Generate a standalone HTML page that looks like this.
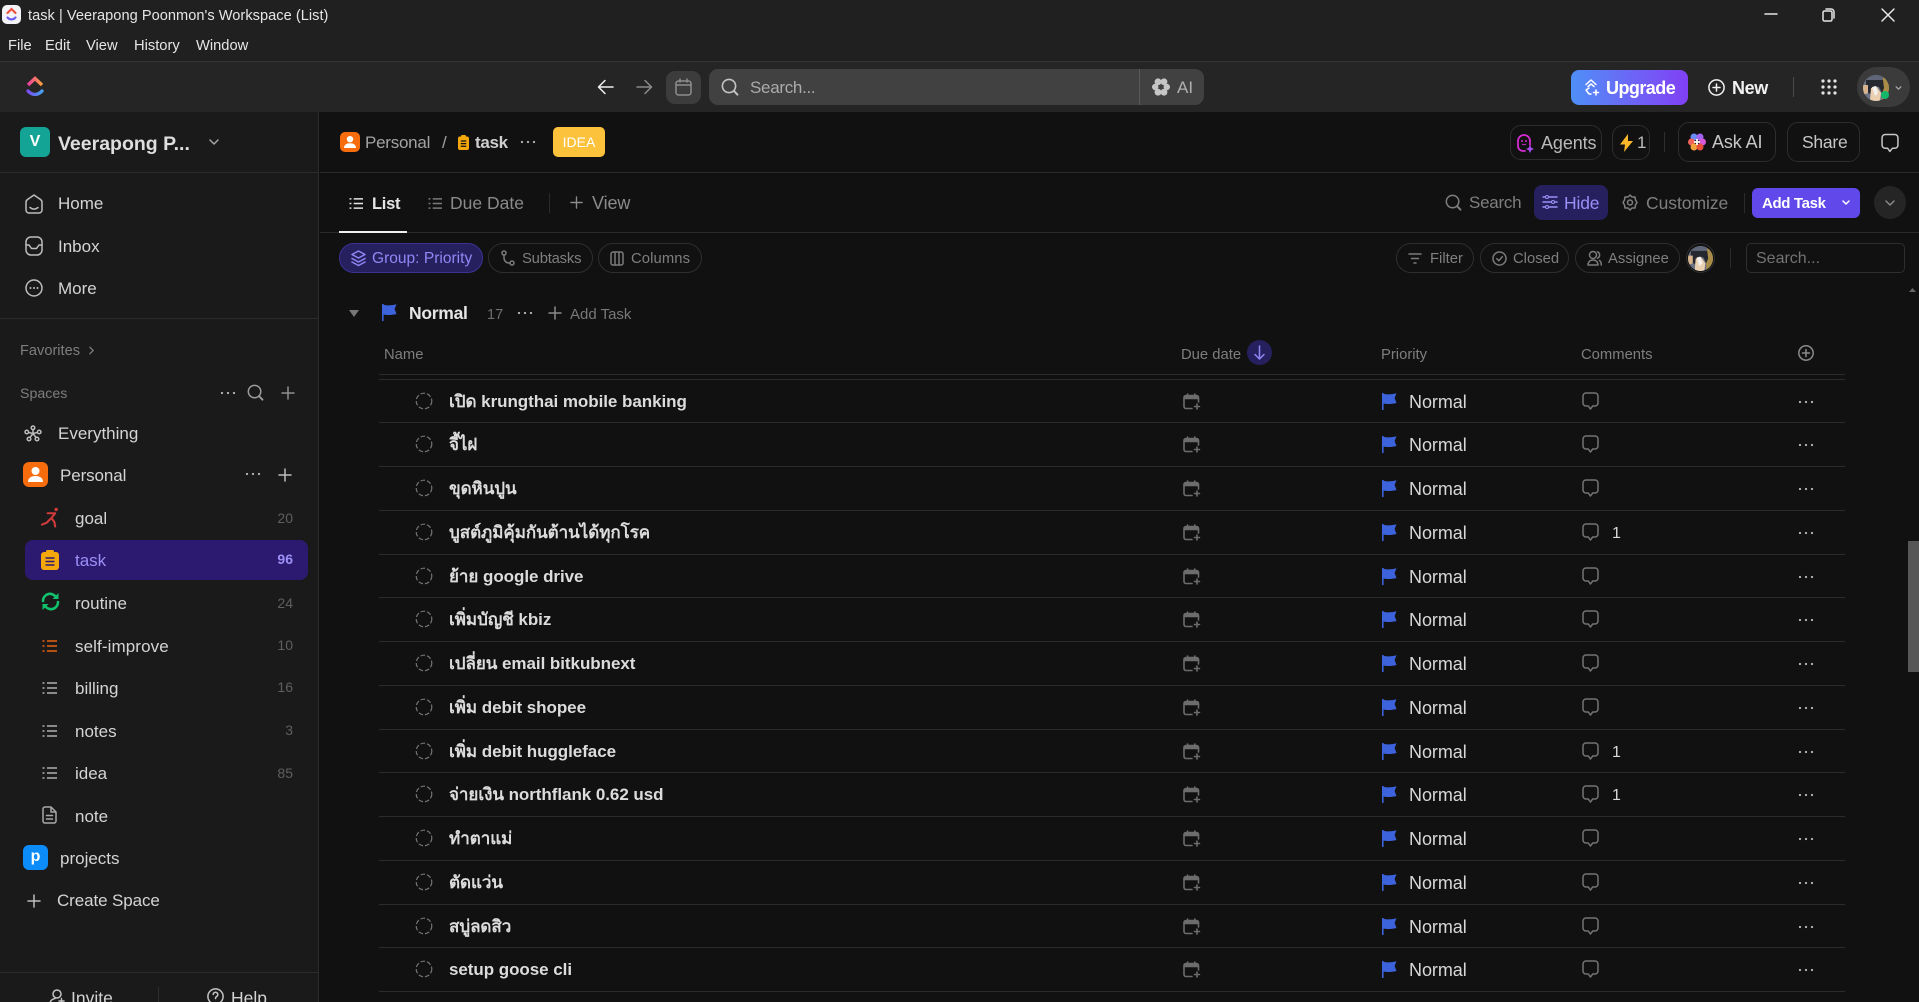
<!DOCTYPE html>
<html lang="en"><head><meta charset="utf-8"><title>task | Veerapong Poonmon's Workspace (List)</title>
<style>
*{box-sizing:border-box}
html,body{margin:0;padding:0;width:1919px;height:1002px;overflow:hidden;background:#111;font-family:"Liberation Sans","Noto Sans CJK SC",sans-serif;color:#ddd}
#w{position:absolute;left:0;top:0;width:1919px;height:1002px;overflow:hidden;background:#111}
.a{position:absolute}
.t{position:absolute;white-space:nowrap;line-height:24px;height:24px}
svg{position:absolute;overflow:visible}
.s{fill:none;stroke:currentColor;stroke-width:1.5;stroke-linecap:round;stroke-linejoin:round}
.chip{position:absolute;border:1px solid #2e2e2e;border-radius:15px;height:30px;top:243px}
.line{position:absolute;height:1px;background:#2b2b2b}
.nav{font-size:17px;color:#d4d4d4}
.cnt{font-size:14px;color:#5f5f5f;text-align:right;width:40px;left:253px}
.r{position:absolute;left:0;width:1919px;height:44px}
.r .name{left:449px;top:11px;font-size:17px;font-weight:700;color:#dcdcdc;letter-spacing:-.05px}
.r .pri{left:1409px;top:11px;font-size:18px;color:#d8d8d8;letter-spacing:-.06px}
.r .one{left:1612px;top:12px;font-size:16px;color:#d8d8d8}
.r .fl{left:1382px;top:14px}
.r .dt{left:1798px;top:21px}
.g{color:#8a8a8a}
.ch{font-size:14.8px;color:#7f7f7f}
.hd{font-size:14.8px;color:#7e7e7e;top:343px}
.rl{left:379px;width:1466px;height:1px;background:#2b2b2b;position:absolute}
</style></head><body>
<div id="w">
<svg width="0" height="0" style="position:absolute">
<symbol id="flag" viewBox="0 0 15 17"><path d="M0 0h1.600v17H0zM1.600 .8C5 1.800 9.500 1.600 14.500 .3L12.600 5l1.900 5C9.500 11.200 5 11.400 1.600 10.500z" fill="#3c62dc"/></symbol>
<symbol id="cal" viewBox="0 0 18 17"><g fill="none" stroke="#6c6c6c" stroke-width="1.600" stroke-linecap="round"><path d="M9 15.500H3a2 2 0 0 1-2-2V4.500a2 2 0 0 1 2-2h10.500a2 2 0 0 1 2 2V9"/><path d="M1 5.500h14.500M4.600 1v3M11.800 1v3"/><path d="M14 11v5M11.500 13.500h5"/></g><path d="M1.500 3h13.500v2.500H1.500z" fill="#6c6c6c"/></symbol>
<symbol id="cm" viewBox="0 0 17 18"><path d="M4 1h9a3 3 0 0 1 3 3v7a3 3 0 0 1-3 3h-2.300l-2.300 3-2.100-3H4a3 3 0 0 1-3-3V4a3 3 0 0 1 3-3z" fill="none" stroke="#747474" stroke-width="1.500" stroke-linejoin="round"/></symbol>
<symbol id="circ" viewBox="0 0 18 18"><circle cx="9" cy="9" r="7.800" fill="none" stroke="#747474" stroke-width="1.200" stroke-dasharray="4.600 2"/></symbol>
<symbol id="dots" viewBox="0 0 16 4"><circle cx="2" cy="2" r="1.150" fill="#b5b5b5"/><circle cx="8" cy="2" r="1.150" fill="#b5b5b5"/><circle cx="14" cy="2" r="1.150" fill="#b5b5b5"/></symbol>
<symbol id="lst" viewBox="0 0 16 14"><g fill="none" stroke="currentColor" stroke-width="1.600"><path d="M5 2h10M5 7h10M5 12h10"/><path d="M.5 2h2M.5 7h2M.5 12h2"/></g></symbol>
<symbol id="plus" viewBox="0 0 14 14"><path d="M7 1v12M1 7h12" fill="none" stroke="currentColor" stroke-width="1.500" stroke-linecap="round"/></symbol>
<symbol id="mag" viewBox="0 0 18 18"><circle cx="8" cy="8" r="6.600" fill="none" stroke="currentColor" stroke-width="1.600"/><path d="M12.800 12.800l3.600 3.800" fill="none" stroke="currentColor" stroke-width="2" stroke-linecap="round"/></symbol>
<symbol id="av" viewBox="0 0 26 26"><clipPath id="cp"><circle cx="13" cy="13" r="13"/></clipPath><g clip-path="url(#cp)"><rect width="26" height="26" fill="#6d7385"/><path d="M19 0h7v26h-7z" fill="#a98c46"/><path d="M3 5h17l1 8-2 5-3-6-4-1-3 2-2 6-4-3z" fill="#26282f"/><path d="M0 10l5 0 0 8-5 2z" fill="#d7b48e"/><path d="M8 13l6-1 4 6-1 8H7z" fill="#ead0b0"/><path d="M9 12l4-1 2 7-3 3z" fill="#f4f2ee"/><path d="M3 0h17v5H3z" fill="#5f6678"/></g></symbol>
</svg>

<!-- title bar -->
<div class="a" style="left:0;top:0;width:1919px;height:61px;background:#202020"></div>
<div class="a" style="left:2px;top:5px;width:19px;height:19px;border-radius:5px;background:#f4f4f8"></div>
<svg style="left:6px;top:7px" width="11" height="15" viewBox="0 0 11 15"><path d="M1.500 6L5.500 2l4 4" fill="none" stroke="#f0533f" stroke-width="2.200" stroke-linecap="round"/><path d="M1.500 10.500c2.400 2.600 5.600 2.600 8 0" fill="none" stroke="#6a5cf5" stroke-width="2.200" stroke-linecap="round"/></svg>
<div class="t" style="left:28px;top:4px;font-size:14.600px;color:#e6e6e6;letter-spacing:.03px">task | Veerapong Poonmon's Workspace (List)</div>
<div class="t" style="left:8px;top:34px;font-size:14.700px;color:#e6e6e6">File</div>
<div class="t" style="left:45px;top:34px;font-size:14.700px;color:#e6e6e6">Edit</div>
<div class="t" style="left:86px;top:34px;font-size:14.700px;color:#e6e6e6">View</div>
<div class="t" style="left:134px;top:34px;font-size:14.700px;color:#e6e6e6">History</div>
<div class="t" style="left:196px;top:34px;font-size:14.700px;color:#e6e6e6">Window</div>
<svg style="left:1765px;top:8px;color:#e5e5e5" width="130" height="14" viewBox="0 0 130 14"><path class="s" d="M0 6h12" stroke-width="1.200"/><rect class="s" x="58" y="3" width="9" height="10" rx="1.500" stroke-width="1.200"/><path class="s" d="M61 1h5a3 3 0 0 1 3 3v6" stroke-width="1.200"/><path class="s" d="M117 1l12 12M129 1l-12 12" stroke-width="1.200"/></svg>
<!-- toolbar -->
<div class="a" style="left:0;top:61px;width:1919px;height:51px;background:#252525;border-top:1px solid #353535"></div>
<svg style="left:26px;top:76px" width="18" height="21" viewBox="0 0 18 21"><defs><linearGradient id="lg1" x1="0" y1="0" x2="1" y2="0"><stop offset="0" stop-color="#f03ea0"/><stop offset="1" stop-color="#fba03a"/></linearGradient><linearGradient id="lg2" x1="0" y1="0" x2="1" y2="0"><stop offset="0" stop-color="#7a4df5"/><stop offset="1" stop-color="#45a0f0"/></linearGradient></defs><path d="M2 9L9 2.500 16 9" fill="none" stroke="url(#lg1)" stroke-width="3.400"/><path d="M2 15c4.200 4.600 9.800 4.600 14 0" fill="none" stroke="url(#lg2)" stroke-width="3.400" stroke-linecap="round"/></svg>
<svg style="left:597px;top:79px;color:#f0f0f0" width="17" height="16" viewBox="0 0 17 16"><path class="s" d="M16 8H1.500M8 1.500L1.500 8 8 14.500" stroke-width="1.600"/></svg>
<svg style="left:636px;top:79px;color:#8a8a8a" width="17" height="16" viewBox="0 0 17 16"><path class="s" d="M1 8h14.500M9 1.500L15.500 8 9 14.500" stroke-width="1.600"/></svg>
<div class="a" style="left:666px;top:71px;width:35px;height:33px;background:#3c3c3c;border-radius:9px"></div>
<svg style="left:675px;top:78px;color:#8d8d8d" width="17" height="18" viewBox="0 0 17 18"><rect class="s" x="1" y="3" width="15" height="14" rx="2.500"/><path class="s" d="M1 7h15M5 1v3M12 1v3"/></svg>
<div class="a" style="left:709px;top:69px;width:495px;height:36px;background:#414141;border-radius:9px"></div>
<div class="a" style="left:1139px;top:69px;width:1px;height:36px;background:#5a5a5a"></div>
<svg style="left:721px;top:78px;color:#c4c4c4" width="18" height="18"><use href="#mag"/></svg>
<div class="t" style="left:750px;top:76px;font-size:17px;color:#ababab;letter-spacing:-.3px">Search...</div>
<svg style="left:1152px;top:78px" width="18" height="18" viewBox="0 0 18 18"><g fill="#c6c6c6"><circle cx="6" cy="3.800" r="3.400"/><circle cx="12" cy="3.800" r="3.400"/><circle cx="3.200" cy="9" r="3.200"/><circle cx="14.800" cy="9" r="3.200"/><circle cx="6" cy="14.200" r="3.400"/><circle cx="12" cy="14.200" r="3.400"/></g><circle cx="9" cy="9" r="2.400" fill="#414141"/></svg>
<div class="t" style="left:1177px;top:76px;font-size:17px;color:#b0b0b0">AI</div>
<div class="a" style="left:1571px;top:70px;width:117px;height:35px;border-radius:8px;background:linear-gradient(90deg,#4f8ff7,#6e63f6 55%,#8040f5)"></div>
<svg style="left:1583px;top:78px;color:#fff" width="17" height="18" viewBox="0 0 17 18"><path class="s" d="M3 6.500L8 2l5 4.500M5 8.500L8 6l3 2.500M3 12l3-2M3 12l3 4h2M13 12v5M10.500 14.500h5"/></svg>
<div class="t" style="left:1606px;top:76px;font-size:18px;font-weight:700;color:#fff;letter-spacing:-.55px">Upgrade</div>
<svg style="left:1708px;top:79px;color:#f3f3f3" width="17" height="17" viewBox="0 0 17 17"><circle class="s" cx="8.500" cy="8.500" r="7.600"/><path class="s" d="M8.500 5v7M5 8.500h7"/></svg>
<div class="t" style="left:1732px;top:76px;font-size:18px;font-weight:700;color:#f2f2f2;letter-spacing:-.4px">New</div>
<div class="a" style="left:1793px;top:77px;width:1px;height:20px;background:#4a4a4a"></div>
<svg style="left:1821px;top:79px" width="16" height="16" viewBox="0 0 16 16"><g fill="#e4e4e4"><circle cx="2" cy="2" r="1.600"/><circle cx="8" cy="2" r="1.600"/><circle cx="14" cy="2" r="1.600"/><circle cx="2" cy="8" r="1.600"/><circle cx="8" cy="8" r="1.600"/><circle cx="14" cy="8" r="1.600"/><circle cx="2" cy="14" r="1.600"/><circle cx="8" cy="14" r="1.600"/><circle cx="14" cy="14" r="1.600"/></g></svg>
<div class="a" style="left:1857px;top:67px;width:53px;height:40px;background:#3b3b3b;border-radius:20px"></div>
<svg style="left:1863px;top:75px" width="26" height="26"><use href="#av"/></svg>
<div class="a" style="left:1881px;top:91px;width:8px;height:8px;border-radius:50%;background:#12b76a"></div>
<svg style="left:1895px;top:86px;color:#aaa" width="7" height="4" viewBox="0 0 8 5"><path class="s" d="M1 1l3 3 3-3"/></svg>

<!-- sidebar -->
<div class="a" style="left:0;top:112px;width:319px;height:890px;background:#1a1a1a;border-right:1px solid #2b2b2b"></div>
<div class="a" style="left:20px;top:127px;width:30px;height:30px;border-radius:6px;background:#14a495;color:#fff;font-weight:700;font-size:16px;line-height:30px;text-align:center">V</div>
<div class="t" style="left:58px;top:132px;font-size:19.500px;font-weight:700;color:#dedede">Veerapong P...</div>
<svg style="left:209px;top:139px;color:#a6a6a6" width="10" height="7" viewBox="0 0 10 7"><path class="s" d="M1 1l4 4 4-4"/></svg>
<div class="line" style="left:0;top:172px;width:319px"></div>
<svg style="left:25px;top:194px;color:#bdbdbd" width="18" height="20" viewBox="0 0 18 20"><path class="s" d="M1 8c0-1 .5-1.700 1.500-2.500L9 1l6.500 4.500C16.500 6.300 17 7 17 8v8a3 3 0 0 1-3 3H4a3 3 0 0 1-3-3z"/><path class="s" d="M5 13.500c2.500 2 5.500 2 8 0"/></svg>
<div class="t nav" style="left:58px;top:192px">Home</div>
<svg style="left:25px;top:236px;color:#bdbdbd" width="18" height="20" viewBox="0 0 18 20"><rect class="s" x="1" y="1" width="16" height="18" rx="5"/><path class="s" d="M1 9h3l2.500 3.500h5L14 9h3"/></svg>
<div class="t nav" style="left:58px;top:235px">Inbox</div>
<svg style="left:25px;top:279px;color:#bdbdbd" width="18" height="18" viewBox="0 0 18 18"><circle class="s" cx="9" cy="9" r="8"/><g fill="#bdbdbd"><circle cx="5.500" cy="9" r="1"/><circle cx="9" cy="9" r="1"/><circle cx="12.500" cy="9" r="1"/></g></svg>
<div class="t nav" style="left:58px;top:277px">More</div>
<div class="line" style="left:0;top:318px;width:319px"></div>
<div class="t" style="left:20px;top:339px;font-size:14.600px;color:#7e7e7e">Favorites</div>
<svg style="left:89px;top:346px;color:#7e7e7e" width="5" height="9" viewBox="0 0 6 10"><path class="s" d="M1 1l4 4-4 4" stroke-width="1.200"/></svg>
<div class="t" style="left:20px;top:382px;font-size:14.200px;color:#7e7e7e">Spaces</div>
<svg style="left:220px;top:391px" width="16" height="4"><use href="#dots"/></svg>
<svg style="left:247px;top:384px;color:#9c9c9c" width="17" height="17"><use href="#mag"/></svg>
<svg style="left:281px;top:386px;color:#8e8e8e" width="14" height="14"><use href="#plus"/></svg>
<svg style="left:24px;top:425px" width="18" height="17" viewBox="0 0 18 17"><g fill="none" stroke="#bcbcbc" stroke-width="1.500"><circle cx="9" cy="2.800" r="1.800"/><circle cx="2.800" cy="7" r="1.800"/><circle cx="15.200" cy="7" r="1.800"/><circle cx="5" cy="14" r="1.800"/><circle cx="13" cy="14" r="1.800"/><path d="M9 4.500v4M4.500 7.500L9 8.500l4.500-1M6 12.500l3-4 3 4"/></g></svg>
<div class="t nav" style="left:58px;top:422px">Everything</div>
<div class="a" style="left:23px;top:462px;width:25px;height:25px;border-radius:6px;background:#f76c0c"></div>
<svg style="left:28px;top:465px" width="15" height="19" viewBox="0 0 15 19"><circle cx="7.500" cy="6" r="4" fill="#fff"/><path d="M0 17c0-4 3-6 7.500-6s7.500 2 7.500 6z" fill="#fff"/></svg>
<div class="t nav" style="left:60px;top:464px;letter-spacing:-.1px">Personal</div>
<svg style="left:245px;top:472px" width="16" height="4"><use href="#dots"/></svg>
<svg style="left:278px;top:468px;color:#bdbdbd" width="14" height="14"><use href="#plus"/></svg>
<svg style="left:41px;top:507px" width="18" height="21" viewBox="0 0 19 21"><g fill="none" stroke="#d23b3b" stroke-width="2.200" stroke-linecap="round" stroke-linejoin="round"><path d="M7 6h8l-4 5 3 4 1 5M10 12l-4 4-5 2"/></g><circle cx="16" cy="2" r="1.800" fill="#d23b3b"/></svg>
<div class="t nav" style="left:75px;top:507px">goal</div><div class="t cnt" style="top:506px">20</div>
<div class="a" style="left:25px;top:540px;width:283px;height:40px;border-radius:8px;background:#2c1a70"></div>
<svg style="left:41px;top:550px" width="18" height="20" viewBox="0 0 18 20"><rect x="0" y="2" width="18" height="18" rx="3" fill="#f5a80b"/><rect x="5" y="0" width="8" height="5" rx="1.500" fill="#f5a80b"/><path d="M4.500 8h9M4.500 11.500h9M4.500 15h9" stroke="#2c1a70" stroke-width="1.500"/></svg>
<div class="t nav" style="left:75px;top:549px;color:#9c90f7">task</div><div class="t cnt" style="top:547px;color:#9c90f7;font-weight:700">96</div>
<svg style="left:41px;top:592px" width="19" height="19" viewBox="0 0 19 19"><g fill="none" stroke="#10c26c" stroke-width="2.600" stroke-linecap="round"><path d="M2 9a7 7 0 0 1 12.500-4.500"/><path d="M17 10a7 7 0 0 1-12.500 4.500"/></g><path d="M17.500 1v6h-6zM1.500 18v-6h6z" fill="#10c26c"/></svg>
<div class="t nav" style="left:75px;top:592px">routine</div><div class="t cnt" style="top:591px">24</div>
<svg style="left:42px;top:639px;color:#e8620e" width="16" height="14"><use href="#lst"/></svg>
<div class="t nav" style="left:75px;top:635px;letter-spacing:.1px">self-improve</div><div class="t cnt" style="top:633px">10</div>
<svg style="left:42px;top:681px;color:#b0b0b0" width="16" height="14"><use href="#lst"/></svg>
<div class="t nav" style="left:75px;top:677px">billing</div><div class="t cnt" style="top:675px">16</div>
<svg style="left:42px;top:724px;color:#b0b0b0" width="16" height="14"><use href="#lst"/></svg>
<div class="t nav" style="left:75px;top:720px">notes</div><div class="t cnt" style="top:718px">3</div>
<svg style="left:42px;top:766px;color:#b0b0b0" width="16" height="14"><use href="#lst"/></svg>
<div class="t nav" style="left:75px;top:762px">idea</div><div class="t cnt" style="top:761px">85</div>
<svg style="left:42px;top:806px;color:#a8a8a8" width="15" height="18" viewBox="0 0 15 18"><path class="s" d="M3 1h6l5 5v9a2 2 0 0 1-2 2H3a2 2 0 0 1-2-2V3a2 2 0 0 1 2-2zM9 1v5h5M4.500 9.500h6M4.500 13h6"/></svg>
<div class="t nav" style="left:75px;top:805px">note</div>
<div class="a" style="left:23px;top:845px;width:25px;height:25px;border-radius:6px;background:#0c8cf8;color:#fff;font-weight:700;font-size:16px;line-height:24px;text-align:center">p</div>
<div class="t nav" style="left:60px;top:847px">projects</div>
<svg style="left:27px;top:894px;color:#bdbdbd" width="14" height="14"><use href="#plus"/></svg>
<div class="t nav" style="left:57px;top:889px;letter-spacing:-.1px">Create Space</div>
<div class="line" style="left:0;top:972px;width:319px"></div>
<div class="a" style="left:158px;top:987px;width:1px;height:15px;background:#2f2f2f"></div>
<svg style="left:49px;top:989px;color:#c4c4c4" width="16" height="16" viewBox="0 0 16 16"><circle class="s" cx="8" cy="5" r="4"/><path class="s" d="M1 15c0-3 2-5 5-5.500M10 12h5M12.500 9.500v5"/></svg>
<div class="t" style="left:71px;top:986px;font-size:17.500px;color:#d4d4d4">Invite</div>
<svg style="left:207px;top:988px;color:#c4c4c4" width="17" height="17" viewBox="0 0 17 17"><circle class="s" cx="8.500" cy="8.500" r="7.600"/><path class="s" d="M6.200 6.500a2.300 2.300 0 1 1 3.500 2c-.8.500-1.200 1-1.200 2"/></svg>
<div class="t" style="left:231px;top:986px;font-size:17.500px;color:#d4d4d4">Help</div>

<!-- main header -->
<div class="line" style="left:320px;top:172px;width:1599px"></div>
<div class="line" style="left:320px;top:232px;width:1599px"></div>
<div class="a" style="left:340px;top:132px;width:20px;height:20px;border-radius:5px;background:#f76c0c"></div>
<svg style="left:344px;top:134px" width="12" height="16" viewBox="0 0 15 19"><circle cx="7.500" cy="6" r="4" fill="#fff"/><path d="M0 17c0-4 3-6 7.500-6s7.500 2 7.500 6z" fill="#fff"/></svg>
<div class="t" style="left:365px;top:131px;font-size:17px;color:#a3a3a3;letter-spacing:-.25px">Personal</div>
<div class="t" style="left:442px;top:131px;font-size:17px;color:#a3a3a3">/</div>
<svg style="left:458px;top:135px" width="11" height="15" viewBox="0 0 18 20" preserveAspectRatio="none"><rect x="0" y="2" width="18" height="18" rx="3" fill="#f5a80b"/><rect x="5" y="0" width="8" height="5" rx="1.500" fill="#f5a80b"/><path d="M4.500 8h9M4.500 11.500h9M4.500 15h9" stroke="#111" stroke-width="1.800"/></svg>
<div class="t" style="left:475px;top:131px;font-size:17px;font-weight:700;color:#cfcfcf;letter-spacing:-.3px">task</div>
<svg style="left:520px;top:140px" width="16" height="4"><use href="#dots"/></svg>
<div class="a" style="left:553px;top:127px;width:52px;height:30px;border-radius:5px;background:#fdc23c;color:#fff;font-size:14px;line-height:30px;text-align:center">IDEA</div>

<div class="a" style="left:1510px;top:125px;width:92px;height:35px;border:1px solid #2d2d2d;border-radius:11px"></div>
<svg style="left:1517px;top:134px" width="19" height="19" viewBox="0 0 19 19"><path d="M8 17H6A5 5 0 0 1 1 12V7a6 6 0 0 1 12 0v4" fill="none" stroke="#d42bd0" stroke-width="1.800" stroke-linecap="round"/><circle cx="5" cy="7" r="1" fill="#d42bd0"/><circle cx="9" cy="7" r="1" fill="#d42bd0"/><path d="M5 10c1 1 3 1 4 0" fill="none" stroke="#d42bd0"/><path d="M13 11l1.300 2.700 2.700 1.300-2.700 1.300L13 19l-1.300-2.700L9 15l2.700-1.300z" fill="#a94df0"/></svg>
<div class="t" style="left:1541px;top:131px;font-size:18px;color:#b9b9b9;letter-spacing:-.1px">Agents</div>
<div class="a" style="left:1612px;top:125px;width:38px;height:35px;border:1px solid #2d2d2d;border-radius:11px"></div>
<svg style="left:1620px;top:134px" width="13" height="18" viewBox="0 0 13 18"><path d="M8 0L0 10.500h5L4 18l9-11H8z" fill="#fbb62a"/></svg>
<div class="t" style="left:1637px;top:131px;font-size:17px;color:#bdbdbd">1</div>
<div class="a" style="left:1664px;top:132px;width:1px;height:20px;background:#2d2d2d"></div>
<div class="a" style="left:1678px;top:122px;width:98px;height:40px;border:1px solid #2d2d2d;border-radius:11px"></div>
<svg style="left:1688px;top:133px" width="18" height="18" viewBox="0 0 18 18"><circle cx="6" cy="4" r="3.500" fill="#6a8cf5"/><circle cx="12" cy="4" r="3.500" fill="#a064f0"/><circle cx="3.500" cy="9" r="3.500" fill="#f2645a"/><circle cx="14.500" cy="9" r="3.500" fill="#d95ad8"/><circle cx="6" cy="14" r="3.500" fill="#f2a23c"/><circle cx="12" cy="14" r="3.500" fill="#e8503a"/><path d="M9 6v6M6 9h6" stroke="#fff" stroke-width="1.800"/></svg>
<div class="t" style="left:1712px;top:130px;font-size:18px;color:#c6c6c6;letter-spacing:-.1px">Ask AI</div>
<div class="a" style="left:1787px;top:122px;width:73px;height:40px;border:1px solid #2d2d2d;border-radius:11px"></div>
<div class="t" style="left:1802px;top:130px;font-size:17.500px;color:#c6c6c6;letter-spacing:-.25px">Share</div>
<svg style="left:1881px;top:133px" width="18" height="20" viewBox="0 0 17 18"><path d="M4 1h9a3 3 0 0 1 3 3v7a3 3 0 0 1-3 3h-2.300l-2.300 3-2.100-3H4a3 3 0 0 1-3-3V4a3 3 0 0 1 3-3z" fill="none" stroke="#c8c8c8" stroke-width="1.400" stroke-linejoin="round"/></svg>

<!-- tabs -->
<svg style="left:349px;top:197px;color:#e4e4e4" width="15" height="13"><use href="#lst"/></svg>
<div class="t" style="left:372px;top:192px;font-size:16.500px;font-weight:700;color:#e6e6e6;letter-spacing:-.3px">List</div>
<div class="a" style="left:339px;top:231px;width:68px;height:2px;background:#f0f0f0"></div>
<svg style="left:428px;top:197px;color:#7a7a7a" width="15" height="13"><use href="#lst"/></svg>
<div class="t g" style="left:450px;top:191px;font-size:17.500px">Due Date</div>
<div class="a" style="left:549px;top:193px;width:1px;height:20px;background:#2b2b2b"></div>
<svg style="left:570px;top:196px;color:#8a8a8a" width="13" height="13"><use href="#plus"/></svg>
<div class="t g" style="left:592px;top:191px;font-size:18px;letter-spacing:-.1px">View</div>

<svg style="left:1445px;top:194px;color:#7f7f7f" width="17" height="17"><use href="#mag"/></svg>
<div class="t" style="left:1469px;top:191px;font-size:17px;color:#7f7f7f;letter-spacing:-.25px">Search</div>
<div class="a" style="left:1534px;top:185px;width:74px;height:35px;border-radius:8px;background:#27205f"></div>
<svg style="left:1542px;top:195px;color:#9b8ff8" width="16" height="14" viewBox="0 0 16 14"><path class="s" d="M1 2h14M1 7h14M1 12h14" stroke-width="1.300"/><circle cx="5" cy="2" r="1.500" fill="#27205f" stroke="#9b8ff8"/><circle cx="11" cy="7" r="1.500" fill="#27205f" stroke="#9b8ff8"/><circle cx="5" cy="12" r="1.500" fill="#27205f" stroke="#9b8ff8"/></svg>
<div class="t" style="left:1564px;top:191px;font-size:17.500px;color:#9b8ff8;letter-spacing:-.15px">Hide</div>
<svg style="left:1622px;top:194px;color:#7f7f7f" width="16" height="17" viewBox="0 0 16 17"><path class="s" d="M8 1l2 2h3l.5 3L15 8.500 13.500 11l-.5 3h-3l-2 2-2-2H3l-.5-3L1 8.500 2.500 6 3 3h3z"/><circle class="s" cx="8" cy="8.500" r="2.500"/></svg>
<div class="t" style="left:1646px;top:191px;font-size:17.500px;color:#7f7f7f;letter-spacing:-.05px">Customize</div>
<div class="a" style="left:1744px;top:193px;width:1px;height:20px;background:#2b2b2b"></div>
<div class="a" style="left:1752px;top:188px;width:108px;height:30px;border-radius:6px;background:#6048ea"></div>
<div class="t" style="left:1762px;top:192px;font-size:15px;font-weight:700;color:#fff;letter-spacing:-.35px">Add Task</div>
<svg style="left:1842px;top:200px;color:#fff" width="8" height="5" viewBox="0 0 8 5"><path class="s" d="M1 1l3 3 3-3" stroke-width="1.200"/></svg>
<div class="a" style="left:1874px;top:186px;width:32px;height:33px;border-radius:50%;background:#252525"></div>
<svg style="left:1885px;top:200px;color:#8a8a8a" width="10" height="6" viewBox="0 0 10 6"><path class="s" d="M1 1l4 4 4-4" stroke-width="1.300"/></svg>

<!-- chips -->
<div class="chip" style="left:339px;width:144px;background:#27205f;border-color:#3b3292"></div>
<svg style="left:351px;top:250px;color:#8f86f5" width="15" height="17" viewBox="0 0 15 17"><path class="s" d="M7.500 1L14 4.500 7.500 8 1 4.500zM1 8.500L7.500 12 14 8.500M1 12L7.500 15.500 14 12" stroke-width="1.200"/></svg>
<div class="t" style="left:372px;top:246px;font-size:15.500px;color:#9087f5;line-height:26px;letter-spacing:.02px">Group: Priority</div>
<div class="chip" style="left:488px;width:105px"></div>
<svg style="left:501px;top:250px;color:#7a7a7a" width="14" height="16" viewBox="0 0 14 16"><circle class="s" cx="3" cy="3" r="2"/><circle class="s" cx="11" cy="13" r="2"/><path class="s" d="M3 5v3a5 5 0 0 0 5 5h1"/></svg>
<div class="t ch" style="left:522px;top:246px;line-height:26px;letter-spacing:-.2px">Subtasks</div>
<div class="chip" style="left:598px;width:104px"></div>
<svg style="left:610px;top:251px;color:#7a7a7a" width="14" height="15" viewBox="0 0 14 15"><rect class="s" x="1" y="1" width="12" height="13" rx="2"/><path class="s" d="M5 1v13M9 1v13"/></svg>
<div class="t ch" style="left:631px;top:246px;line-height:26px;letter-spacing:.1px">Columns</div>

<div class="chip" style="left:1396px;width:78px"></div>
<svg style="left:1408px;top:253px;color:#7a7a7a" width="14" height="11" viewBox="0 0 14 11"><path class="s" d="M1 1h12M3.500 5.500h7M6 10h2"/></svg>
<div class="t ch" style="left:1430px;top:246px;line-height:26px">Filter</div>
<div class="chip" style="left:1480px;width:89px"></div>
<svg style="left:1492px;top:251px;color:#7a7a7a" width="15" height="15" viewBox="0 0 15 15"><circle class="s" cx="7.500" cy="7.500" r="6.500"/><path class="s" d="M4.800 7.700l2 2 3.500-4"/></svg>
<div class="t ch" style="left:1513px;top:246px;line-height:26px">Closed</div>
<div class="chip" style="left:1575px;width:105px"></div>
<svg style="left:1587px;top:250px;color:#7a7a7a" width="15" height="16" viewBox="0 0 15 16"><circle class="s" cx="6" cy="5" r="3.500"/><path class="s" d="M1 15c0-3 2-5 5-5s5 2 5 5zM10.500 1.800a3.500 3.500 0 0 1 0 6.400M12.500 10.500c1.200.8 1.800 2.400 1.800 4.500"/></svg>
<div class="t ch" style="left:1608px;top:246px;line-height:26px">Assignee</div>
<div class="a" style="left:1686px;top:243px;width:29px;height:30px;border:1px solid #2e2e2e;border-radius:50%"></div>
<svg style="left:1688px;top:246px" width="25" height="25"><use href="#av"/></svg>
<div class="a" style="left:1730px;top:248px;width:1px;height:20px;background:#2b2b2b"></div>
<div class="a" style="left:1746px;top:243px;width:159px;height:30px;border:1px solid #2e2e2e;border-radius:5px"></div>
<div class="t" style="left:1756px;top:246px;font-size:16px;color:#737373;line-height:26px">Search...</div>
<svg style="left:1909px;top:288px" width="7" height="4" viewBox="0 0 7 4"><path d="M0 4l3.500-4L7 4z" fill="#666"/></svg>

<!-- group -->
<svg style="left:349px;top:310px" width="10" height="7" viewBox="0 0 10 7"><path d="M0 0h10L5 7z" fill="#777"/></svg>
<svg style="left:382px;top:304px" width="15" height="17"><use href="#flag"/></svg>
<div class="t" style="left:409px;top:301px;font-size:17.500px;font-weight:700;color:#e6e6e6;letter-spacing:-.28px">Normal</div>
<div class="t" style="left:487px;top:303px;font-size:14.500px;color:#6f6f6f">17</div>
<svg style="left:517px;top:311px" width="16" height="4"><use href="#dots"/></svg>
<svg style="left:548px;top:306px;color:#8a8a8a" width="14" height="14"><use href="#plus"/></svg>
<div class="t" style="left:570px;top:303px;font-size:15px;color:#787878">Add Task</div>

<!-- header row -->
<div class="t hd" style="left:384px">Name</div>
<div class="t hd" style="left:1181px">Due date</div>
<div class="a" style="left:1247px;top:340px;width:25px;height:25px;border-radius:50%;background:#27205f"></div>
<svg style="left:1254px;top:345px;color:#8f86f5" width="11" height="15" viewBox="0 0 11 15"><path class="s" d="M5.500 1v13M1 9.500l4.500 4.500L10 9.500" stroke-width="1.200"/></svg>
<div class="t hd" style="left:1381px">Priority</div>
<div class="t hd" style="left:1581px">Comments</div>
<svg style="left:1798px;top:345px;color:#8a8a8a" width="16" height="16" viewBox="0 0 16 16"><circle class="s" cx="8" cy="8" r="7.200"/><path class="s" d="M8 4.500v7M4.500 8h7"/></svg>
<div class="line" style="left:379px;top:374px;width:1466px"></div>
<div class="line" style="left:379px;top:379px;width:1466px"></div>

<div class="r" style="top:379px"><svg style="left:415px;top:13px" width="18" height="18"><use href="#circ"/></svg><div class="t name">เปิด krungthai mobile banking</div><svg style="left:1183px;top:14px" width="18" height="17"><use href="#cal"/></svg><svg class="fl" width="15" height="17"><use href="#flag"/></svg><div class="t pri">Normal</div><svg style="left:1582px;top:13px" width="17" height="18"><use href="#cm"/></svg><svg class="dt" width="16" height="4"><use href="#dots"/></svg><div class="rl" style="top:43px"></div></div>
<div class="r" style="top:422px"><svg style="left:415px;top:13px" width="18" height="18"><use href="#circ"/></svg><div class="t name">จี้ไฝ</div><svg style="left:1183px;top:14px" width="18" height="17"><use href="#cal"/></svg><svg class="fl" width="15" height="17"><use href="#flag"/></svg><div class="t pri">Normal</div><svg style="left:1582px;top:13px" width="17" height="18"><use href="#cm"/></svg><svg class="dt" width="16" height="4"><use href="#dots"/></svg><div class="rl" style="top:44px"></div></div>
<div class="r" style="top:466px"><svg style="left:415px;top:13px" width="18" height="18"><use href="#circ"/></svg><div class="t name">ขุดหินปูน</div><svg style="left:1183px;top:14px" width="18" height="17"><use href="#cal"/></svg><svg class="fl" width="15" height="17"><use href="#flag"/></svg><div class="t pri">Normal</div><svg style="left:1582px;top:13px" width="17" height="18"><use href="#cm"/></svg><svg class="dt" width="16" height="4"><use href="#dots"/></svg><div class="rl" style="top:44px"></div></div>
<div class="r" style="top:510px"><svg style="left:415px;top:13px" width="18" height="18"><use href="#circ"/></svg><div class="t name">บูสต์ภูมิคุ้มกันต้านได้ทุกโรค</div><svg style="left:1183px;top:14px" width="18" height="17"><use href="#cal"/></svg><svg class="fl" width="15" height="17"><use href="#flag"/></svg><div class="t pri">Normal</div><svg style="left:1582px;top:13px" width="17" height="18"><use href="#cm"/></svg><div class="t one">1</div><svg class="dt" width="16" height="4"><use href="#dots"/></svg><div class="rl" style="top:44px"></div></div>
<div class="r" style="top:554px"><svg style="left:415px;top:13px" width="18" height="18"><use href="#circ"/></svg><div class="t name">ย้าย google drive</div><svg style="left:1183px;top:14px" width="18" height="17"><use href="#cal"/></svg><svg class="fl" width="15" height="17"><use href="#flag"/></svg><div class="t pri">Normal</div><svg style="left:1582px;top:13px" width="17" height="18"><use href="#cm"/></svg><svg class="dt" width="16" height="4"><use href="#dots"/></svg><div class="rl" style="top:43px"></div></div>
<div class="r" style="top:597px"><svg style="left:415px;top:13px" width="18" height="18"><use href="#circ"/></svg><div class="t name">เพิ่มบัญชี kbiz</div><svg style="left:1183px;top:14px" width="18" height="17"><use href="#cal"/></svg><svg class="fl" width="15" height="17"><use href="#flag"/></svg><div class="t pri">Normal</div><svg style="left:1582px;top:13px" width="17" height="18"><use href="#cm"/></svg><svg class="dt" width="16" height="4"><use href="#dots"/></svg><div class="rl" style="top:44px"></div></div>
<div class="r" style="top:641px"><svg style="left:415px;top:13px" width="18" height="18"><use href="#circ"/></svg><div class="t name">เปลี่ยน email bitkubnext</div><svg style="left:1183px;top:14px" width="18" height="17"><use href="#cal"/></svg><svg class="fl" width="15" height="17"><use href="#flag"/></svg><div class="t pri">Normal</div><svg style="left:1582px;top:13px" width="17" height="18"><use href="#cm"/></svg><svg class="dt" width="16" height="4"><use href="#dots"/></svg><div class="rl" style="top:44px"></div></div>
<div class="r" style="top:685px"><svg style="left:415px;top:13px" width="18" height="18"><use href="#circ"/></svg><div class="t name">เพิ่ม debit shopee</div><svg style="left:1183px;top:14px" width="18" height="17"><use href="#cal"/></svg><svg class="fl" width="15" height="17"><use href="#flag"/></svg><div class="t pri">Normal</div><svg style="left:1582px;top:13px" width="17" height="18"><use href="#cm"/></svg><svg class="dt" width="16" height="4"><use href="#dots"/></svg><div class="rl" style="top:44px"></div></div>
<div class="r" style="top:729px"><svg style="left:415px;top:13px" width="18" height="18"><use href="#circ"/></svg><div class="t name">เพิ่ม debit huggleface</div><svg style="left:1183px;top:14px" width="18" height="17"><use href="#cal"/></svg><svg class="fl" width="15" height="17"><use href="#flag"/></svg><div class="t pri">Normal</div><svg style="left:1582px;top:13px" width="17" height="18"><use href="#cm"/></svg><div class="t one">1</div><svg class="dt" width="16" height="4"><use href="#dots"/></svg><div class="rl" style="top:43px"></div></div>
<div class="r" style="top:772px"><svg style="left:415px;top:13px" width="18" height="18"><use href="#circ"/></svg><div class="t name">จ่ายเงิน northflank 0.62 usd</div><svg style="left:1183px;top:14px" width="18" height="17"><use href="#cal"/></svg><svg class="fl" width="15" height="17"><use href="#flag"/></svg><div class="t pri">Normal</div><svg style="left:1582px;top:13px" width="17" height="18"><use href="#cm"/></svg><div class="t one">1</div><svg class="dt" width="16" height="4"><use href="#dots"/></svg><div class="rl" style="top:44px"></div></div>
<div class="r" style="top:816px"><svg style="left:415px;top:13px" width="18" height="18"><use href="#circ"/></svg><div class="t name">ทำตาแม่</div><svg style="left:1183px;top:14px" width="18" height="17"><use href="#cal"/></svg><svg class="fl" width="15" height="17"><use href="#flag"/></svg><div class="t pri">Normal</div><svg style="left:1582px;top:13px" width="17" height="18"><use href="#cm"/></svg><svg class="dt" width="16" height="4"><use href="#dots"/></svg><div class="rl" style="top:44px"></div></div>
<div class="r" style="top:860px"><svg style="left:415px;top:13px" width="18" height="18"><use href="#circ"/></svg><div class="t name">ตัดแว่น</div><svg style="left:1183px;top:14px" width="18" height="17"><use href="#cal"/></svg><svg class="fl" width="15" height="17"><use href="#flag"/></svg><div class="t pri">Normal</div><svg style="left:1582px;top:13px" width="17" height="18"><use href="#cm"/></svg><svg class="dt" width="16" height="4"><use href="#dots"/></svg><div class="rl" style="top:44px"></div></div>
<div class="r" style="top:904px"><svg style="left:415px;top:13px" width="18" height="18"><use href="#circ"/></svg><div class="t name">สบู่ลดสิว</div><svg style="left:1183px;top:14px" width="18" height="17"><use href="#cal"/></svg><svg class="fl" width="15" height="17"><use href="#flag"/></svg><div class="t pri">Normal</div><svg style="left:1582px;top:13px" width="17" height="18"><use href="#cm"/></svg><svg class="dt" width="16" height="4"><use href="#dots"/></svg><div class="rl" style="top:43px"></div></div>
<div class="r" style="top:947px"><svg style="left:415px;top:13px" width="18" height="18"><use href="#circ"/></svg><div class="t name">setup goose cli</div><svg style="left:1183px;top:14px" width="18" height="17"><use href="#cal"/></svg><svg class="fl" width="15" height="17"><use href="#flag"/></svg><div class="t pri">Normal</div><svg style="left:1582px;top:13px" width="17" height="18"><use href="#cm"/></svg><svg class="dt" width="16" height="4"><use href="#dots"/></svg><div class="rl" style="top:44px"></div></div>

<!-- scrollbar -->
<div class="a" style="left:1908px;top:541px;width:11px;height:131px;background:#575757"></div>
</div>
</body></html>
